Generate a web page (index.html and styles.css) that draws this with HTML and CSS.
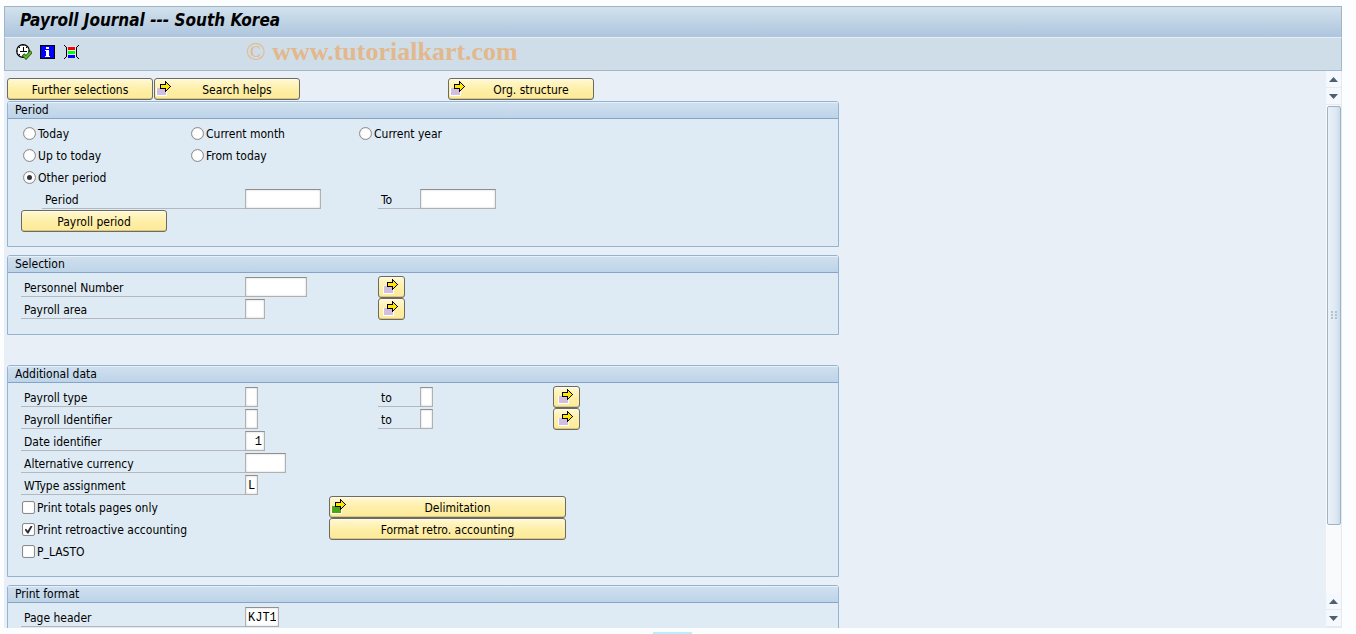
FILE: index.html
```html
<!DOCTYPE html>
<html lang="en">
<head>
  <meta charset="UTF-8">
  <meta name="viewport" content="width=device-width, initial-scale=1.0">
  <title>Payroll Journal --- South Korea</title>
  <link rel="stylesheet" href="styles.css">
</head>
<body>
  <!-- shared icons -->
  <svg class="defs" aria-hidden="true">
    <symbol id="arrow" viewBox="0 0 16 16">
      <path d="M0 8h11v8H0z" fill="#fff"/>
      <path class="block" d="M1 8h9v7H1z"/>
      <path d="M4 4h5V1h1v1h1v1h1v1h1v1h1v1h1v1h-1v1h-1v1h-1v1h-1v1h-1v1H9V9H4z" fill="#000"/>
      <path d="M5 5h5V3h1v1h1v1h1v1h1v1h-1v1h-1v1h-1v1h-1V8H5z" fill="#ffe600"/>
    </symbol>
  </svg>

  <div class="window">
    <header class="titlebar"><h1>Payroll Journal --- South Korea</h1></header>

    <div class="toolbar">
      <button class="tool" aria-label="Execute">
        <svg viewBox="0 0 16 16">
          <circle cx="7" cy="7" r="6.3" fill="#fff" stroke="#000" stroke-width="1.2"/>
          <path d="M7 1v1M7 12v1M1 7h1M12 7h1M3 3l1 1M11 3l-1 1M3 11l1-1" stroke="#000"/>
          <path d="M7.5 3v5M4 7.5h7" stroke="#000" stroke-width="1"/>
          <path d="M7 10.500l3 3 5.500-6" fill="none" stroke="#1c4a0c" stroke-width="3.5"/>
          <path d="M7.500 11l2.500 2.500 5-5.500" fill="none" stroke="#62b52c" stroke-width="2"/>
        </svg>
      </button>
      <button class="tool" aria-label="Information">
        <svg viewBox="0 0 16 16" shape-rendering="crispEdges">
          <path d="M0 1h15v14H0z" fill="#000"/>
          <path d="M1 2h13v12H1z" fill="#00f"/>
          <path d="M6 3h3v2H6zM5 6h4v6h1v1H5v-1h1V7H5z" fill="#fff"/>
        </svg>
      </button>
      <button class="tool" aria-label="Get variant">
        <svg viewBox="0 0 16 16" shape-rendering="crispEdges">
          <path d="M4 2h8v12H4z" fill="#dce8f2"/>
          <path d="M4 3h7v3H4z" fill="#f00"/>
          <path d="M4 7h7v3H4z" fill="#0f0"/>
          <path d="M4 11h7v3H4z" fill="#00f"/>
          <path d="M0 1h1v1H0zM1 2h1v1H1zM2 3h1v10H2zM1 13h1v1H1zM0 14h1v1H0zM14 1h1v1h-1zM13 2h1v1h-1zM12 3h1v10h-1zM13 13h1v1h-1zM14 14h1v1h-1z" fill="#000"/>
        </svg>
      </button>
      <span class="watermark"><span class="copy">©</span> www.tutorialkart.com</span>
    </div>

    <div class="body">
      <main class="screen">
        <div class="actions">
          <button class="btn">Further selections</button>
          <button class="btn"><svg class="icon"><use href="#arrow"/></svg><span>Search helps</span></button>
          <button class="btn org"><svg class="icon"><use href="#arrow"/></svg><span>Org. structure</span></button>
        </div>

        <section class="panel">
          <h2>Period</h2>
          <div class="content">
            <div class="radios">
              <label><input type="radio" name="period">Today</label>
              <label><input type="radio" name="period">Current month</label>
              <label><input type="radio" name="period">Current year</label>
              <label><input type="radio" name="period">Up to today</label>
              <label><input type="radio" name="period">From today</label>
            </div>
            <div class="radios">
              <label><input type="radio" name="period" checked>Other period</label>
            </div>
            <div class="row">
              <label class="name indent" for="from">Period</label>
              <input class="w-date" type="text" id="from">
              <label class="name" for="until">To</label>
              <input class="w-date" type="text" id="until">
            </div>
            <button class="btn">Payroll period</button>
          </div>
        </section>

        <section class="panel spaced">
          <h2>Selection</h2>
          <div class="content">
            <div class="row">
              <label class="name" for="pernr">Personnel Number</label>
              <input class="w-8" type="text" id="pernr">
              <button class="btn more" aria-label="Multiple selection"><svg class="icon"><use href="#arrow"/></svg></button>
            </div>
            <div class="row">
              <label class="name" for="area">Payroll area</label>
              <input class="w-2" type="text" id="area">
              <button class="btn more" aria-label="Multiple selection"><svg class="icon"><use href="#arrow"/></svg></button>
            </div>
          </div>
        </section>

        <section class="panel">
          <h2>Additional data</h2>
          <div class="content">
            <div class="row">
              <label class="name" for="type">Payroll type</label>
              <input class="w-1" type="text" id="type">
              <label class="name" for="typeTo">to</label>
              <input class="w-1" type="text" id="typeTo">
              <button class="btn more" aria-label="Multiple selection"><svg class="icon"><use href="#arrow"/></svg></button>
            </div>
            <div class="row">
              <label class="name" for="ident">Payroll Identifier</label>
              <input class="w-1" type="text" id="ident">
              <label class="name" for="identTo">to</label>
              <input class="w-1" type="text" id="identTo">
              <button class="btn more" aria-label="Multiple selection"><svg class="icon"><use href="#arrow"/></svg></button>
            </div>
            <div class="row">
              <label class="name" for="dateId">Date identifier</label>
              <input class="w-2 right" type="text" id="dateId" value="1">
            </div>
            <div class="row">
              <label class="name" for="currency">Alternative currency</label>
              <input class="w-5" type="text" id="currency">
            </div>
            <div class="row">
              <label class="name" for="wtype">WType assignment</label>
              <input class="w-1" type="text" id="wtype" value="L">
            </div>
            <div class="checks">
              <label><input type="checkbox">Print totals pages only</label>
              <button class="btn"><svg class="icon green"><use href="#arrow"/></svg><span>Delimitation</span></button>
              <label><input type="checkbox" checked>Print retroactive accounting</label>
              <button class="btn">Format retro. accounting</button>
              <label><input type="checkbox">P_LASTO</label>
            </div>
          </div>
        </section>

        <section class="panel">
          <h2>Print format</h2>
          <div class="content">
            <div class="row">
              <label class="name" for="header">Page header</label>
              <input class="w-4" type="text" id="header" value="KJT1">
            </div>
          </div>
        </section>
      </main>

      <div class="scrollbar">
        <button aria-label="Scroll up"><svg viewBox="0 0 9 5"><path d="M0 5L4.500 0 9 5z"/></svg></button>
        <button aria-label="Scroll down"><svg viewBox="0 0 9 5"><path d="M0 0l4.500 5L9 0z"/></svg></button>
        <div class="track">
          <div class="thumb"><i></i><i></i><i></i><i></i><i></i><i></i></div>
        </div>
        <button aria-label="Scroll up"><svg viewBox="0 0 9 5"><path d="M0 5L4.500 0 9 5z"/></svg></button>
        <button aria-label="Scroll down"><svg viewBox="0 0 9 5"><path d="M0 0l4.500 5L9 0z"/></svg></button>
      </div>
    </div>
  </div>
  <div class="handle"></div>
</body>
</html>
```

FILE: styles.css
```css
* {
  box-sizing: border-box;
}
body {
  margin: 0;
  padding: 6px 14px 0 4px;
  height: 100vh;
  display: flex;
  flex-direction: column;
  overflow: hidden;
  background: #fcfdfe;
  color: #000;
  font-family: "DejaVu Sans Condensed", Tahoma, sans-serif;
  font-size: 12px;
  line-height: 16px;
}
button, input {
  font: inherit;
  color: inherit;
  margin: 0;
}
.defs {
  display: none;
}

/* window frame */
.window {
  flex: 1;
  min-height: 0;
  display: flex;
  flex-direction: column;
}
.titlebar {
  height: 31px;
  flex: none;
  padding: 0 15px;
  border: 1px solid #9fb4c8;
  border-bottom: 0;
  background: linear-gradient(#d2e1ec, #adc5dd);
}
h1 {
  margin: 0;
  font-size: 17px;
  line-height: 26px;
  font-style: italic;
  font-weight: bold;
}
.toolbar {
  height: 34px;
  flex: none;
  display: flex;
  align-items: center;
  gap: 8px;
  padding: 0 11px 5px;
  border: 1px solid #a5b8ca;
  border-top-color: #e6eef5;
  background: #cfdde8;
}
.tool {
  width: 16px;
  height: 16px;
  padding: 0;
  border: 0;
  background: none;
}
.tool svg {
  display: block;
  width: 16px;
  height: 16px;
}
.watermark {
  margin-left: 158px;
  color: #e2b88c;
  font-family: "Liberation Serif", serif;
  font-size: 26px;
  line-height: 28px;
  font-weight: bold;
}
.copy {
  font-weight: normal;
}
.body {
  flex: 1;
  min-height: 0;
  display: flex;
  border-left: 1px solid #e8eff6;
}
.screen {
  flex: 1;
  padding: 7px 2px 0;
  overflow: hidden;
  background: #e8eff7;
}

/* buttons */
.actions {
  display: flex;
  gap: 1px;
  margin-bottom: 1px;
}
.btn {
  display: flex;
  align-items: center;
  justify-content: center;
  width: 146px;
  height: 22px;
  padding: 2px 1px 0;
  border: 1px solid #6b6b63;
  border-radius: 3px;
  background: linear-gradient(#fff8d4, #feefa8 50%, #fdea98);
  box-shadow: inset 0 1px #fffbe6, inset 0 -1px #d9c680;
}
.btn span {
  flex: 1;
  padding-left: 4px;
}
.org {
  margin-left: 147px;
}
.more {
  width: 27px;
  padding-right: 3px;
}
.icon {
  flex: none;
  width: 16px;
  height: 16px;
  margin-bottom: 4px;
  fill: #d2bede;
  shape-rendering: crispEdges;
}
.green {
  fill: #4ba614;
}

/* group boxes */
.panel {
  max-width: 832px;
  margin-bottom: 8px;
  border: 1px solid #93b3d2;
  border-radius: 3px 3px 0 0;
  background: #deebf4;
}
.spaced {
  margin-bottom: 30px;
}
h2 {
  margin: 0;
  padding-left: 7px;
  border-bottom: 1px solid #87a3c8;
  border-radius: 2px 2px 0 0;
  background: linear-gradient(#d0e0ef, #bdd4e8);
  box-shadow: inset 0 1px #e6f0f8;
  font-size: 12px;
  line-height: 16px;
  font-weight: normal;
}
.content {
  padding: 3px 13px 14px;
}
.row {
  display: grid;
  grid-template-columns: 224px 133px 42px 133px auto;
  height: 22px;
  align-items: start;
}
.name {
  height: 21px;
  padding: 4px 3px 0;
  border-bottom: 1px solid #b4b8bc;
}
.indent {
  margin-left: 21px;
}
.radios {
  display: grid;
  grid-template-columns: repeat(3, 168px);
  grid-auto-rows: 22px;
  padding-left: 2px;
}
.radios label, .checks label {
  display: flex;
  align-items: flex-start;
  gap: 2px;
  padding-top: 4px;
}
.checks {
  display: grid;
  grid-template-columns: 307px 237px;
  grid-auto-rows: 22px;
  padding-left: 1px;
}
.checks .btn {
  width: 237px;
}

/* fields */
input[type="text"] {
  height: 20px;
  margin-top: 1px;
  padding: 1px 2px 0;
  border: 1px solid #b0b0b0;
  border-top-color: #8f8f8f;
  background: #fff;
  box-shadow: inset 0 0 2px #c4c4c4;
  font-family: "Liberation Mono", monospace;
}
.w-1 { width: 13px; }
.w-2 { width: 20px; }
.w-4 { width: 34px; }
.w-5 { width: 41px; }
.w-8 { width: 62px; }
.w-date { width: 76px; }
.right {
  text-align: right;
}
input[type="radio"], input[type="checkbox"] {
  appearance: none;
  flex: none;
  display: grid;
  place-items: center;
  width: 13px;
  height: 13px;
  margin-top: 1px;
  border: 1px solid #8b8b8b;
  background: #fff;
  box-shadow: inset 0 0 1px #b8b8b8;
}
input[type="radio"] {
  border-radius: 50%;
}
input[type="checkbox"] {
  border-radius: 2px;
}
input[type="radio"]:checked::before {
  content: "";
  width: 5px;
  height: 5px;
  border-radius: 50%;
  background: #33333f;
}
input[type="checkbox"]:checked::before {
  content: "";
  width: 8px;
  height: 8px;
  background: #2c2c3a;
  clip-path: polygon(0 50%, 20% 40%, 40% 65%, 80% 0, 100% 10%, 50% 100%, 35% 100%);
}

/* scrollbar */
.scrollbar {
  flex: none;
  width: 16px;
  display: flex;
  flex-direction: column;
  border-right: 1px solid #e4eaf1;
  border-bottom: 1px solid #e4eaf1;
  background: #f9fafc;
}
.scrollbar button {
  display: flex;
  align-items: center;
  justify-content: center;
  width: 15px;
  height: 17px;
  padding: 0;
  border: 0;
  border-bottom: 1px solid #e6ebf1;
  background: #f5f8fc;
}
.scrollbar svg {
  width: 9px;
  height: 5px;
  fill: #4d5f70;
}
.track {
  flex: 1;
  padding: 1px 0 0 1px;
}
.thumb {
  height: 86%;
  display: grid;
  grid-template-columns: 2px 2px;
  gap: 1px 2px;
  place-content: center;
  border: 1px solid #9fb2c4;
  border-radius: 2px;
  background: linear-gradient(90deg, #eaf2f9, #dbe7f2 70%, #cbdcea);
}
.thumb i {
  width: 2px;
  height: 2px;
  background: #b3c2d1;
}
.handle {
  flex: none;
  width: 39px;
  height: 2px;
  margin: 4px 0 0 649px;
  background: #bdeef8;
}
```
